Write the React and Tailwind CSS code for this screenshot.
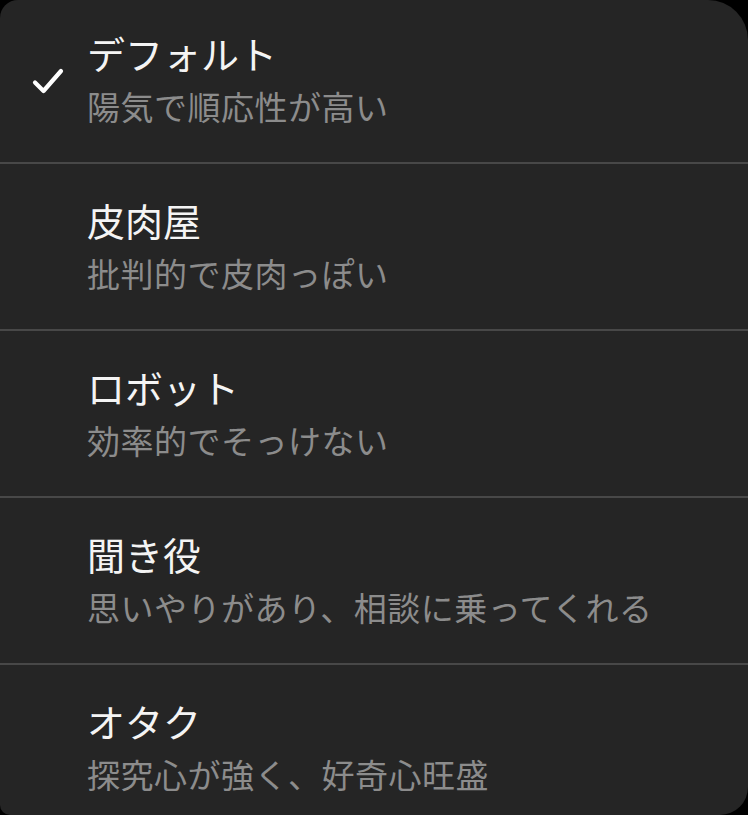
import { useState } from 'react';

const personas = [
  { id: 'default', name: 'デフォルト', desc: '陽気で順応性が高い' },
  { id: 'cynic', name: '皮肉屋', desc: '批判的で皮肉っぽい' },
  { id: 'robot', name: 'ロボット', desc: '効率的でそっけない' },
  { id: 'listener', name: '聞き役', desc: '思いやりがあり、相談に乗ってくれる' },
  { id: 'nerd', name: 'オタク', desc: '探究心が強く、好奇心旺盛' },
];

function Check() {
  return (
    <svg width="32" height="26" viewBox="0 0 32 26" fill="none">
      <path d="M3 14.5 L11.5 23 L29 3" stroke="white" strokeWidth="4.2" strokeLinecap="round" strokeLinejoin="round" />
    </svg>
  );
}

function App() {
  const [selected, setSelected] = useState('default');

  return (
    <div className="min-h-screen bg-black" style={{ fontFamily: '"Noto Sans CJK JP", "Noto Sans", sans-serif' }}>
      <div className="h-[815px] w-full overflow-hidden bg-[#252525] rounded-tl-[18px] rounded-tr-[40px] rounded-bl-[10px] rounded-br-[28px]">
        <ul className="-mt-[3px]">
          {personas.map((p, i) => (
            <li key={p.id}>
              <button
                onClick={() => setSelected(p.id)}
                className="flex h-[165px] w-full items-center text-left"
              >
                <div className="flex w-[87px] shrink-0 justify-center pl-[8px] pt-[2px]">
                  {selected === p.id && <Check />}
                </div>
                <div className="flex flex-col -mt-[2px]">
                  <span className="text-[38px] leading-[48px] text-[#f4f4f4]">{p.name}</span>
                  <span className="mt-[7px] text-[33px] leading-[44px] tracking-[0.5px] text-[#8c8c8c]">{p.desc}</span>
                </div>
              </button>
              {i < personas.length - 1 && <div className="h-[2px] bg-[#484848]" />}
            </li>
          ))}
        </ul>
      </div>
    </div>
  );
}

export default App;
